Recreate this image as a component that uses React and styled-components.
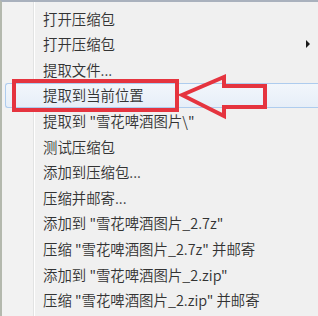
import React from "react";
import styled, { createGlobalStyle } from "styled-components";

const GlobalStyle = createGlobalStyle`
    html, body {
        margin: 0;
        padding: 0;
        width: 318px;
        height: 316px;
        overflow: hidden;
        background: #f0f0f0;
    }
`;

const Menu = styled.div`
    position: relative;
    width: 318px;
    height: 316px;
    box-sizing: border-box;
    border-top: 2px solid #a9b1bd;
    border-left: 2px solid #b4b9ae;
    padding: 4px 0 0 3px;
    background:
        linear-gradient(to right,
            #f2f2f2 0, #f2f2f2 31px,
            #e2e3e3 31px, #e2e3e3 32px,
            #ffffff 32px, #ffffff 33px,
            #f0f0f0 33px);
    font-family: "Microsoft YaHei", "Noto Sans CJK SC", "Liberation Sans", sans-serif;
    font-size: 14.4px;
    font-weight: 350;
    color: #333333;
    display: flex;
    flex-direction: column;
    overflow: hidden;
`;

const Item = styled.div`
    height: 25.6px;
    flex-shrink: 0;
    box-sizing: border-box;
    display: flex;
    align-items: center;
    padding-left: 37px;
    padding-right: 6px;
    white-space: nowrap;
    border: 1px solid ${(p) => (p.$active ? "#aeccee" : "transparent")};
    border-right: none;
    border-radius: 3px 0 0 3px;
    background: ${(p) =>
        p.$active ? "linear-gradient(to bottom, #f2f6fb, #e6eef8)" : "transparent"};
`;

const Label = styled.span`
    flex: 1;
    line-height: 1;
`;

const SubArrow = styled.span`
    width: 0;
    height: 0;
    border-top: 4px solid transparent;
    border-bottom: 4px solid transparent;
    border-left: 4px solid #1a1a1a;
    margin-right: 2px;
`;

const Mark = styled.div`
    position: absolute;
    left: 10px;
    top: 77px;
    width: 167px;
    height: 33px;
    box-sizing: border-box;
    border: 4px solid #e5343f;
`;

const ArrowSvg = styled.svg`
    position: absolute;
    left: 175px;
    top: 70px;
`;

const items = [
    { text: "打开压缩包" },
    { text: "打开压缩包", sub: true },
    { text: "提取文件..." },
    { text: "提取到当前位置", active: true },
    { text: "提取到 \"雪花啤酒图片\\\"" },
    { text: "测试压缩包" },
    { text: "添加到压缩包..." },
    { text: "压缩并邮寄..." },
    { text: "添加到 \"雪花啤酒图片_2.7z\"" },
    { text: "压缩 \"雪花啤酒图片_2.7z\" 并邮寄" },
    { text: "添加到 \"雪花啤酒图片_2.zip\"" },
    { text: "压缩 \"雪花啤酒图片_2.zip\" 并邮寄" },
];

function App() {
    return (
        <>
            <GlobalStyle />
            <Menu>
                {items.map((it, i) => (
                    <Item key={i} $active={it.active}>
                        <Label>{it.text}</Label>
                        {it.sub && <SubArrow />}
                    </Item>
                ))}
                <Mark />
                <ArrowSvg width="100" height="50" viewBox="0 0 100 50">
                    <path
                        d="M5 23 L47 5 L47 14 L88 14 L88 35 L47 35 L47 44 Z"
                        fill="none"
                        stroke="#e5343f"
                        strokeWidth="4"
                        strokeLinejoin="miter"
                    />
                </ArrowSvg>
            </Menu>
        </>
    );
}

export default App;
